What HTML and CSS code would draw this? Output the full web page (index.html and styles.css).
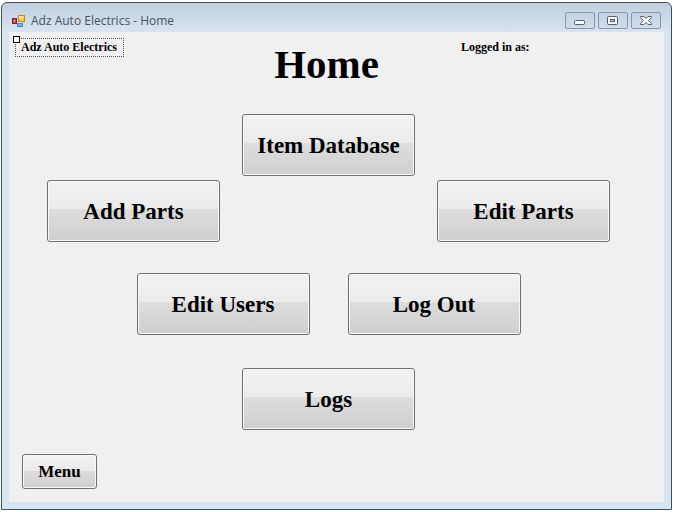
FILE: index.html
```html
<!DOCTYPE html>
<html lang="en">
<head>
<meta charset="utf-8">
<title>Adz Auto Electrics - Home</title>
<link rel="stylesheet" href="styles.css">
</head>
<body>
<div class="window">
  <header class="titlebar">
    <svg class="app-icon" width="14" height="14" viewBox="0 0 14 14" aria-hidden="true">
      <rect x="0.5" y="4.500" width="4" height="5" fill="#d8403a" stroke="#8c1f22"/>
      <rect x="2" y="6" width="1" height="2" fill="#f4b0aa"/>
      <rect x="5.500" y="9.500" width="5" height="3" fill="#6fb2f8" stroke="#4a86d8"/>
      <rect x="6.500" y="1.500" width="6" height="6" fill="#fbc834" stroke="#b98b22"/>
      <rect x="7" y="2" width="4" height="3" fill="#fde48c"/>
    </svg>
    <span class="caption">Adz Auto Electrics - Home</span>
    <div class="controls">
      <button class="control" type="button" aria-label="Minimize">
        <svg width="12" height="12" viewBox="0 0 12 12"><rect x="0.500" y="5.500" width="10" height="4" rx="1" fill="#f7f8fa" stroke="#565d69"/></svg>
      </button>
      <button class="control" type="button" aria-label="Maximize">
        <svg width="12" height="12" viewBox="0 0 12 12"><rect x="0.500" y="1.500" width="10" height="8" rx="1" fill="#f7f8fa" stroke="#565d69"/><rect x="3.500" y="4.500" width="4" height="2" fill="#c5cedb" stroke="#565d69"/></svg>
      </button>
      <button class="control" type="button" aria-label="Close">
        <svg width="12" height="12" viewBox="0 0 12 12"><path d="M0.500 1.500H4L6 3.500L8 1.500H11.500V2.500L8.500 5.500L11.500 8.500V9.500H8L6 7.500L4 9.500H0.500V8.500L3.500 5.500L0.500 2.500Z" fill="#f7f8fa" stroke="#565d69"/></svg>
      </button>
    </div>
  </header>
  <main class="client">
    <div class="heading">
      <span class="brand">Adz Auto Electrics</span>
      <h1 class="title">Home</h1>
      <span class="login">Logged in as:</span>
    </div>
    <nav class="actions">
      <div class="row"><button class="button" type="button">Item Database</button></div>
      <div class="row row-wide"><button class="button" type="button">Add Parts</button><button class="button" type="button">Edit Parts</button></div>
      <div class="row row-pair"><button class="button" type="button">Edit Users</button><button class="button" type="button">Log Out</button></div>
      <div class="row row-last"><button class="button" type="button">Logs</button></div>
    </nav>
    <button class="button button-small" type="button">Menu</button>
  </main>
</div>
</body>
</html>
```
FILE: styles.css
```css
* {
  box-sizing: border-box;
}

body {
  margin: 0;
  padding: 2px 1px;
  background: #fff;
  color: #000;
  font-family: "Palatino Linotype", "Book Antiqua", "Liberation Serif", serif;
  font-weight: bold;
}

.window {
  display: flex;
  flex-direction: column;
  min-height: calc(100vh - 4px);
  padding: 0 7px 7px;
  border: 1px solid #454e59;
  border-radius: 6px 6px 0 0;
  background: linear-gradient(#c0cfdf, #d7e4f1 29px);
}

.titlebar {
  display: flex;
  align-items: center;
  height: 29px;
  padding: 6px 3px 0;
}

.app-icon {
  flex: none;
}

.caption {
  margin-left: 5px;
  color: #4a535f;
  font: 12px/16px "Open Sans", "Noto Sans", sans-serif;
}

.controls {
  display: flex;
  gap: 3px;
  margin-left: auto;
}

.control {
  display: flex;
  align-items: center;
  justify-content: center;
  width: 30px;
  height: 17px;
  padding: 0;
  border: 1px solid #8796af;
  border-radius: 2px;
  background: linear-gradient(#c5d2e2, #d0ddeb);
}

.client {
  display: flex;
  flex: 1;
  flex-direction: column;
  padding: 6px 16px 13px 0;
  background: #f0f0f0;
}

.heading {
  display: grid;
  grid-template-columns: 1fr auto 1fr;
  align-items: start;
  height: 76px;
  padding-right: 4px;
  font-size: 12px;
  line-height: 17px;
}

.brand {
  position: relative;
  justify-self: start;
  margin-left: 6px;
  padding: 0 6px 0 5px;
  border: 1px dotted #555;
}

.brand::before {
  position: absolute;
  top: -3px;
  left: -3px;
  width: 5px;
  height: 5px;
  border: 1px solid #000;
  background: #fff;
  content: "";
}

.title {
  margin: 4px 0 0;
  font-size: 41px;
  line-height: 44px;
}

.login {
  margin: 1px 0 0 82px;
}

.row {
  display: flex;
  justify-content: center;
}

.row-wide {
  gap: 217px;
  margin-top: 4px;
}

.row-pair {
  gap: 38px;
  margin-top: 31px;
}

.row-last {
  margin-top: 33px;
}

.button {
  width: 173px;
  height: 62px;
  padding: 1px 0 0;
  border: 1px solid #707070;
  border-radius: 3px;
  background: linear-gradient(#f2f2f2, #ebebeb 47%, #dddddd 47%, #cfcfcf);
  box-shadow: inset 0 0 0 1px #f8f8f8;
  color: inherit;
  font: inherit;
  font-size: 23px;
}

.button-small {
  width: 75px;
  height: 35px;
  margin: auto 0 0 13px;
  font-size: 17px;
}
```
